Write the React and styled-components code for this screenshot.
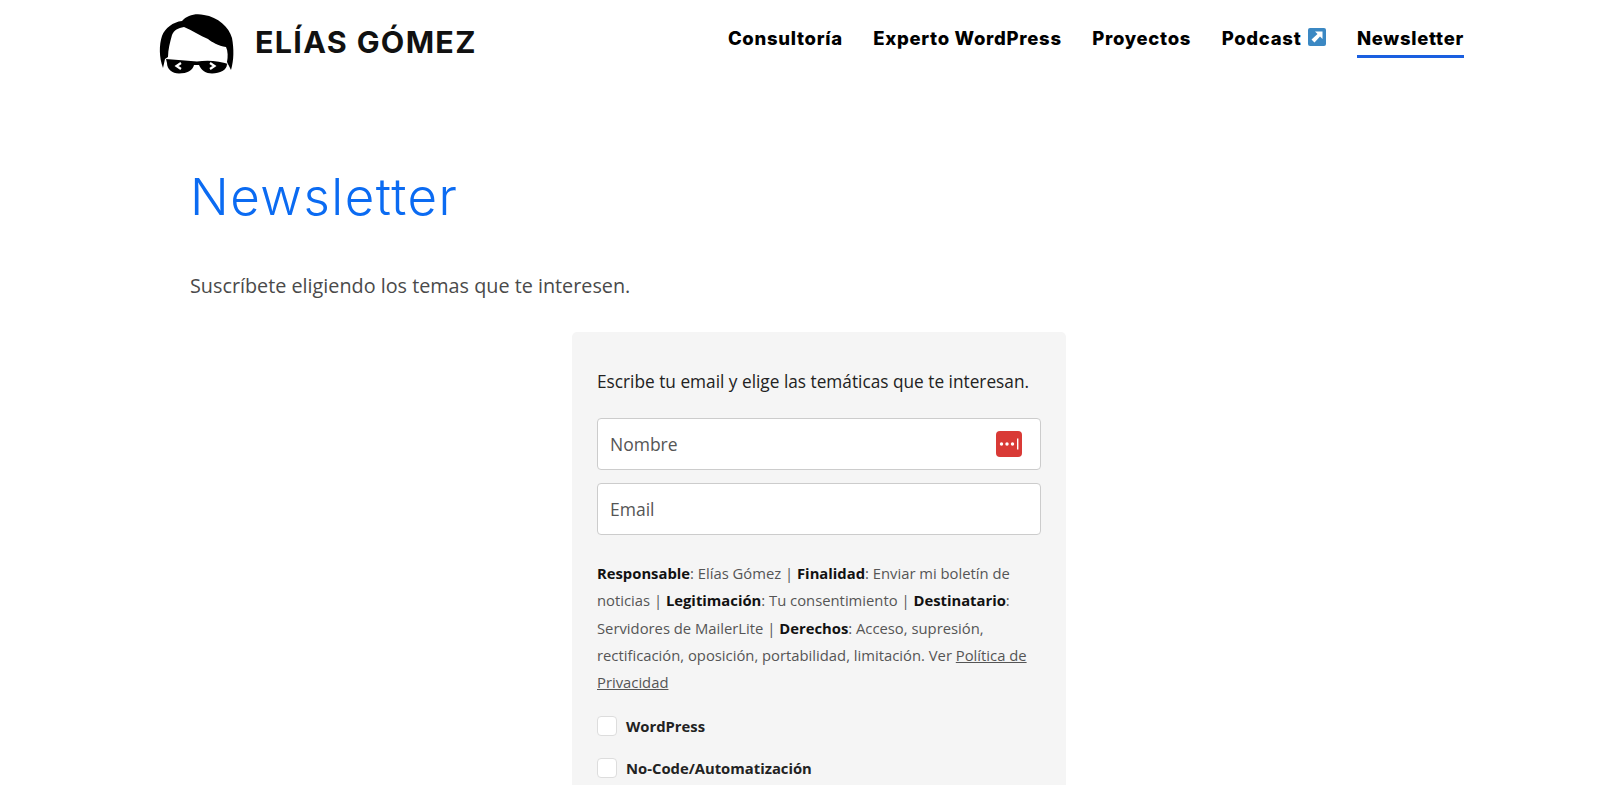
import styled, { createGlobalStyle } from "styled-components";

const Global = createGlobalStyle`
  html, body {
    margin: 0;
    height: 785px;
    overflow: hidden;
    background: #fff;
  }
  * { box-sizing: border-box; }
`;

const Page = styled.div`
  height: 785px;
  overflow: hidden;
  font-family: "Open Sans", "Liberation Sans", sans-serif;
  color: #4a4a4a;
`;

const Header = styled.header`
  display: flex;
  justify-content: space-between;
  height: 90px;
  padding: 13px 136px 0 158px;
`;

const Brand = styled.a`
  display: flex;
  align-items: center;
  gap: 21px;
  height: 64px;
`;

const BrandName = styled.span`
  margin-bottom: 7px;
  color: #111;
  font-family: Inter, "Liberation Sans", sans-serif;
  font-size: 30.5px;
  font-weight: 700;
  letter-spacing: 1.3px;
`;

const Nav = styled.nav`
  display: flex;
  gap: 30.5px;
  padding-top: 13px;
`;

const NavLink = styled.a`
  display: flex;
  align-items: flex-start;
  gap: 7px;
  height: 32px;
  border-bottom: ${(p) => (p.$active ? "3px solid #1a5fe0" : "none")};
  color: #000;
  font-family: Inter, "Liberation Sans", sans-serif;
  font-size: 18.5px;
  font-weight: 800;
  letter-spacing: 0.7px;
  line-height: 24px;
  white-space: nowrap;
  svg {
    margin-top: 2px;
  }
`;

const Main = styled.main`
  display: flex;
  flex-direction: column;
  width: 1258px;
  margin-left: 190px;
`;

const Title = styled.h1`
  margin: 74px 0 0;
  color: #0b6bf2;
  font-family: Inter, "Liberation Sans", sans-serif;
  font-size: 51px;
  font-weight: 300;
  letter-spacing: 1.5px;
  line-height: 66px;
`;

const Lead = styled.p`
  margin: 41px 0 0;
  font-size: 19.8px;
  line-height: 30px;
`;

const Card = styled.section`
  align-self: center;
  width: 494px;
  height: 600px;
  margin-top: 31px;
  padding: 33px 25px 0;
  background: #f5f5f5;
  border-radius: 5px;
`;

const Intro = styled.p`
  margin: 0 0 19px;
  color: #222;
  font-size: 17.25px;
  line-height: 34px;
`;

const Field = styled.div`
  position: relative;
  margin-bottom: 13px;
`;

const Input = styled.input`
  display: block;
  width: 100%;
  height: 52px;
  padding: 0 12px;
  background: #fff;
  border: 1px solid #ccc;
  border-radius: 4px;
  font-family: inherit;
  font-size: 17.5px;
  outline: none;
  &::placeholder {
    color: #555;
    opacity: 1;
  }
`;

const PassIcon = styled.svg`
  position: absolute;
  top: 13px;
  right: 19px;
`;

const Legal = styled.p`
  margin: 25px 0 0;
  color: #555;
  font-size: 14.8px;
  line-height: 27.3px;
  strong {
    color: #111;
  }
  a {
    color: inherit;
    text-decoration: underline;
  }
`;

const Option = styled.label`
  display: flex;
  align-items: center;
  gap: 9px;
  height: 20px;
  margin-top: ${(p) => (p.$first ? "20px" : "22px")};
  color: #222;
  font-size: 14.8px;
  font-weight: 700;
`;

const Check = styled.input`
  appearance: none;
  width: 20px;
  height: 20px;
  margin: 0;
  background: #fff;
  border: 1px solid #ddd;
  border-radius: 4px;
`;

const Logo = () => (
  <svg width="76" height="64" viewBox="8 8 76 64">
    <path
      fill="#000"
      d="M13 63 C9 52 9 40 12 31 C15 23 23 17 32 16 C37 10 46 8 54 10 C68 12 79 22 82 33 C84 44 84 55 81 65 L77 57 C78 52 78 46 76 42 C68 41 62 37 58 34 C50 31 42 25 34 22 C28 23 24 25 22 30 C20 37 18 45 18 52 L15 54 Z"
    />
    <path
      fill="#000"
      d="M16 54 L47 56.5 C56 55 68 55 81 60 L77 59 C77 65 70 68.5 62 68.5 C56 68.5 51 65 49 60 L44 60 C43 65 37 68.5 29 68.5 C22 68.5 17 64 17 58 Z"
    />
    <path
      fill="none"
      stroke="#fff"
      strokeWidth="2.2"
      d="M31 58 L26.5 61 L31 64 M60 58 L64.5 61 L60 64"
    />
  </svg>
);

const LinkOut = () => (
  <svg width="18" height="18" viewBox="0 0 18 18">
    <rect width="18" height="18" rx="2" fill="#3b88c3" />
    <path fill="#fff" d="M7 3.5 H14.5 V11 L12 8.5 L6.5 14.5 L3.5 11.5 L9.5 6 Z" />
  </svg>
);

const PassMark = () => (
  <PassIcon width="26" height="26" viewBox="0 0 26 26">
    <rect width="26" height="26" rx="4" fill="#d93a36" />
    <circle cx="5.5" cy="13" r="1.7" fill="#fff" />
    <circle cx="11" cy="13" r="1.7" fill="#fff" />
    <circle cx="16.5" cy="13" r="1.7" fill="#fff" />
    <rect x="21" y="7.5" width="1.4" height="11" fill="#fff" />
  </PassIcon>
);

export default function App() {
  return (
    <Page>
      <Global />
      <Header>
        <Brand>
          <Logo />
          <BrandName>ELÍAS GÓMEZ</BrandName>
        </Brand>
        <Nav>
          <NavLink>Consultoría</NavLink>
          <NavLink>Experto WordPress</NavLink>
          <NavLink>Proyectos</NavLink>
          <NavLink>
            Podcast <LinkOut />
          </NavLink>
          <NavLink $active>Newsletter</NavLink>
        </Nav>
      </Header>
      <Main>
        <Title>Newsletter</Title>
        <Lead>Suscríbete eligiendo los temas que te interesen.</Lead>
        <Card>
          <Intro>Escribe tu email y elige las temáticas que te interesan.</Intro>
          <Field>
            <Input placeholder="Nombre" />
            <PassMark />
          </Field>
          <Field>
            <Input placeholder="Email" />
          </Field>
          <Legal>
            <strong>Responsable</strong>: Elías Gómez | <strong>Finalidad</strong>: Enviar mi boletín de
            noticias | <strong>Legitimación</strong>: Tu consentimiento | <strong>Destinatario</strong>:
            Servidores de MailerLite | <strong>Derechos</strong>: Acceso, supresión, rectificación,
            oposición, portabilidad, limitación. Ver <a>Política de Privacidad</a>
          </Legal>
          <Option $first>
            <Check type="checkbox" />
            WordPress
          </Option>
          <Option>
            <Check type="checkbox" />
            No-Code/Automatización
          </Option>
        </Card>
      </Main>
    </Page>
  );
}
